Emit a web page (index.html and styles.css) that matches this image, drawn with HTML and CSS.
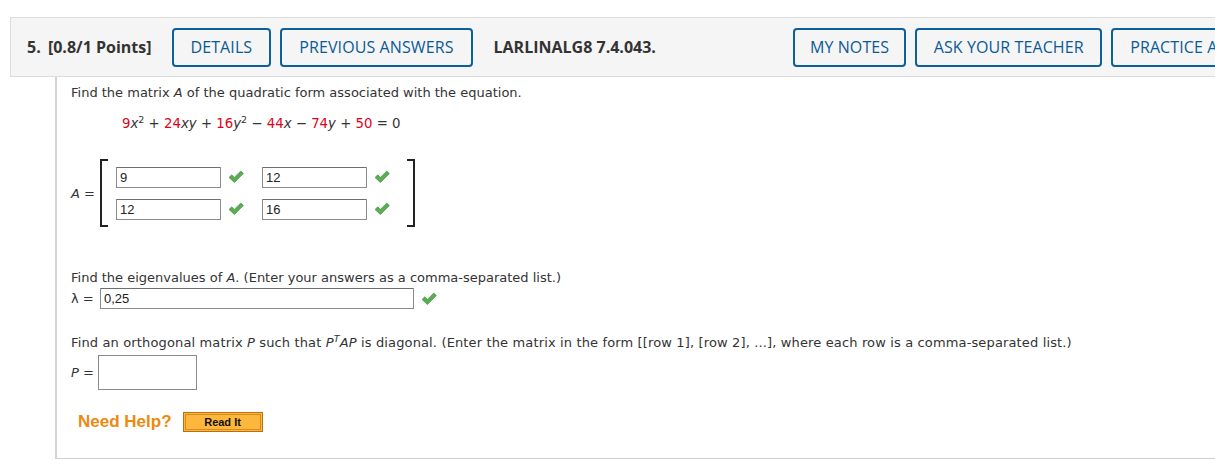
FILE: index.html
```html
<!DOCTYPE html>
<html>
<head>
<meta charset="utf-8">
<link rel="stylesheet" href="styles.css">
</head>
<body>
<div class="page">
  <div class="header">
    <div class="qtitle"><span class="qnum">5.</span> [0.8/1 Points]</div>
    <button class="hbtn btn-details">DETAILS</button>
    <button class="hbtn">PREVIOUS ANSWERS</button>
    <div class="qcode">LARLINALG8 7.4.043.</div>
    <button class="hbtn btn-notes">MY NOTES</button>
    <button class="hbtn btn-ask">ASK YOUR TEACHER</button>
    <button class="hbtn">PRACTICE ANOTHER</button>
  </div>
  <div class="content">
    <p class="line">Find the matrix <i>A</i> of the quadratic form associated with the equation.</p>
    <p class="equation"><span class="r">9</span><i>x</i><sup>2</sup> + <span class="r">24</span><i>xy</i> + <span class="r">16</span><i>y</i><sup>2</sup> &minus; <span class="r">44</span><i>x</i> &minus; <span class="r">74</span><i>y</i> + <span class="r">50</span> = 0</p>

    <div class="matrix-row">
      <span class="lbl"><i>A</i> =</span>
      <div class="bracket bl"></div>
      <div class="mgrid">
        <div class="cell"><input class="tin mcell" value="9"><svg class="check" viewBox="0 0 16 14"><path d="M1 7.5 L3.8 4.8 L6.4 7.4 L12.8 1 L15.4 3.6 L6.4 12.6 Z"/></svg></div>
        <div class="cell"><input class="tin mcell" value="12"><svg class="check" viewBox="0 0 16 14"><path d="M1 7.5 L3.8 4.8 L6.4 7.4 L12.8 1 L15.4 3.6 L6.4 12.6 Z"/></svg></div>
        <div class="cell"><input class="tin mcell" value="12"><svg class="check" viewBox="0 0 16 14"><path d="M1 7.5 L3.8 4.8 L6.4 7.4 L12.8 1 L15.4 3.6 L6.4 12.6 Z"/></svg></div>
        <div class="cell"><input class="tin mcell" value="16"><svg class="check" viewBox="0 0 16 14"><path d="M1 7.5 L3.8 4.8 L6.4 7.4 L12.8 1 L15.4 3.6 L6.4 12.6 Z"/></svg></div>
      </div>
      <div class="bracket br"></div>
    </div>

    <p class="line eig">Find the eigenvalues of <i>A</i>. (Enter your answers as a comma-separated list.)</p>
    <div class="lam-row">
      <span class="lbl">&lambda; =</span>
      <input class="tin lam" value="0,25">
      <svg class="check" viewBox="0 0 16 14"><path d="M1 7.5 L3.8 4.8 L6.4 7.4 L12.8 1 L15.4 3.6 L6.4 12.6 Z"/></svg>
    </div>

    <p class="line orth">Find an orthogonal matrix <i>P</i> such that <i>P</i><sup class="t"><i>T</i></sup><i>AP</i> is diagonal. (Enter the matrix in the form [[row 1], [row 2], ...], where each row is a comma-separated list.)</p>
    <div class="p-row">
      <span class="lbl"><i>P</i> =</span>
      <div class="pbox"></div>
    </div>

    <div class="help">
      <span class="need">Need Help?</span>
      <span class="readit"><span class="readit-in">Read It</span></span>
    </div>
  </div>
</div>
</body>
</html>
```

FILE: styles.css
```css
html, body {
  margin: 0;
  padding: 0;
  background: #fff;
  overflow: hidden;
}
.page {
  padding: 17px 0 0 10px;
}
.header {
  display: flex;
  align-items: center;
  height: 58px;
  background: #f5f5f5;
  border: 1px solid #dcdcdc;
  border-right: none;
  padding-left: 16px;
  overflow: hidden;
  white-space: nowrap;
  font-family: "Open Sans", "Noto Sans", sans-serif;
}
.qtitle {
  font-weight: 700;
  font-size: 16px;
  color: #333;
  flex-shrink: 0;
}
.qnum { margin-right: 3px; }
.hbtn {
  flex-shrink: 0;
  height: 39px;
  box-sizing: border-box;
  border: 2px solid #0e5f9c;
  border-radius: 4px;
  background: transparent;
  color: #0b5a96;
  font-family: "Open Sans", "Noto Sans", sans-serif;
  font-size: 16px;
  font-weight: 500;
  padding: 0 17px;
  margin-right: 9px;
  cursor: pointer;
  letter-spacing: 0.1px;
}
.btn-details { margin-left: 20px; }
.qcode {
  flex-shrink: 0;
  font-weight: 700;
  font-size: 16px;
  color: #333;
  margin-left: 12px;
}
.btn-notes { margin-left: 137px; padding: 0 15px; }
.btn-ask { padding: 0 16.5px; }

.content {
  margin-left: 45px;
  border-left: 2px solid #d4d4d4;
  border-bottom: 1px solid #cfcfcf;
  padding: 8px 0 26px 14px;
  font-family: "DejaVu Sans", Verdana, sans-serif;
  font-size: 13px;
  color: #333;
  height: 347px;
}
.line {
  margin: 0;
  line-height: 16px;
}
.equation {
  margin: 15px 0 0 51px;
  line-height: 16px;
  font-size: 13.3px;
}
.equation .r { color: #e2001a; }
sup {
  font-size: 9.5px;
  line-height: 0;
  vertical-align: 5px;
}
sup.t { vertical-align: 5px; }

.matrix-row {
  display: flex;
  align-items: center;
  margin-top: 27px;
}
.lbl {
  width: 29px;
  flex-shrink: 0;
  color: #333;
}
.bracket {
  width: 6px;
  height: 64px;
  border-top: 2px solid #222;
  border-bottom: 2px solid #222;
}
.bl { border-left: 2px solid #222; }
.br { border-right: 2px solid #222; margin-left: 17px; }
.mgrid {
  display: grid;
  grid-template-columns: auto auto;
  column-gap: 18px;
  row-gap: 11px;
  margin-left: 8px;
}
.cell {
  display: flex;
  align-items: center;
}
.tin {
  box-sizing: border-box;
  height: 21px;
  border: 1px solid #8a8a8a;
  border-top-color: #6f6f6f;
  border-radius: 1px;
  font-family: "Liberation Sans", Arial, sans-serif;
  font-size: 13px;
  color: #222;
  padding: 0 3px;
  margin: 0;
  background: #fff;
}
.mcell { width: 105px; }
.check {
  width: 16px;
  height: 14px;
  margin-left: 7px;
  fill: #5aae52;
  stroke: #3d8a37;
  stroke-width: 0.6;
}
.eig { margin-top: 43px; }
.lam-row {
  display: flex;
  align-items: center;
  margin-top: 2px;
}
.lam-row .lbl { width: 29px; }
.lam { width: 314px; }
.orth { margin-top: 26px; letter-spacing: 0.14px; }
.p-row {
  display: flex;
  align-items: center;
  margin-top: 4px;
}
.p-row .lbl { width: 27px; }
.pbox {
  width: 99px;
  height: 35px;
  box-sizing: border-box;
  border: 1px solid #8a8a8a;
}
.help {
  display: flex;
  align-items: center;
  margin-top: 22px;
  margin-left: 7px;
}
.need {
  font-family: "Liberation Sans", Arial, sans-serif;
  font-weight: 700;
  font-size: 17px;
  color: #ec8a10;
}
.readit {
  margin-left: 11px;
  display: inline-block;
  border: 1px solid #b86f14;
  background: #fdb73c;
  padding: 1px;
}
.readit-in {
  display: block;
  width: 74px;
  height: 14px;
  border: 1px solid #d88b1e;
  text-align: center;
  font-family: "Liberation Sans", Arial, sans-serif;
  font-weight: 700;
  font-size: 11px;
  line-height: 14px;
  color: #111;
}
```
